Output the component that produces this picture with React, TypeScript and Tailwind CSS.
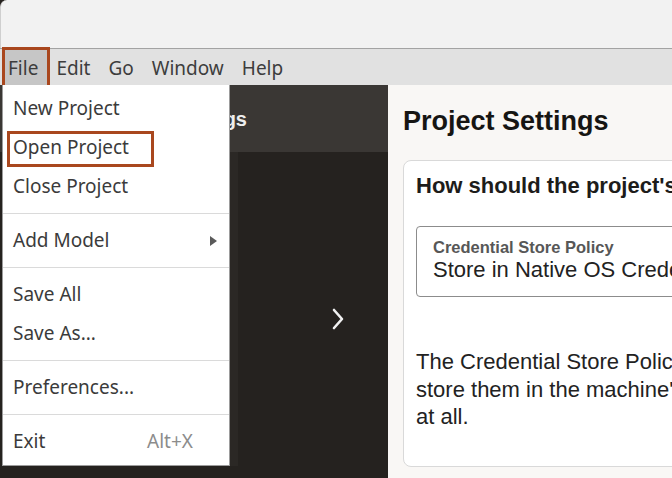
import { ReactNode } from "react";

const menuFont = { fontFamily: '"Noto Sans", "Open Sans", sans-serif' };

function MenuItem({ children, right }: { children: ReactNode; right?: ReactNode }) {
  return (
    <div className="h-[39px] flex items-center justify-between pl-[10px] pr-[12px] text-[19px] text-[#3b3b3b]">
      <span>{children}</span>
      {right}
    </div>
  );
}

function Separator() {
  return (
    <div className="h-[15px] flex items-center">
      <div className="h-px w-full bg-[#dadada]" />
    </div>
  );
}

export default function App() {
  return (
    <div className="w-[672px] h-[478px] overflow-hidden relative bg-[#25221f] flex flex-col">
      {/* Title bar */}
      <div className="h-[48px] shrink-0 bg-[#f2f2f2] rounded-tl-[7px] border-l border-[#cfcfcf]" />
      <div className="h-px shrink-0 bg-[#a3a3a3]" />

      {/* Menu bar */}
      <div
        className="h-[36px] shrink-0 bg-[#e1e1e1] flex items-center pt-[2px] pl-[8px] gap-[18px] text-[19px] text-[#3d3d3d]"
        style={menuFont}
      >
        <span className="relative">
          <span className="absolute -left-[6px] -right-[12px] -top-[7px] -bottom-[6px] bg-[#c6c6c6] border-[3px] border-[#a9471e]" />
          <span className="relative">File</span>
        </span>
        <span>Edit</span>
        <span>Go</span>
        <span>Window</span>
        <span>Help</span>
      </div>

      {/* Content */}
      <div className="flex-1 flex min-h-0">
        {/* Dark side panel */}
        <div className="w-[388px] shrink-0 flex flex-col">
          <div className="h-[67px] shrink-0 bg-[#3a3734] flex items-center">
            <div
              className="w-[247px] text-right text-[20px] font-bold text-[#eeeeee] whitespace-nowrap overflow-hidden"
              style={{ fontFamily: '"Liberation Sans", Arial, sans-serif' }}
            >
              Settings
            </div>
          </div>
          <div className="flex-1 bg-[#25221f] flex items-start justify-end pr-[43px] pt-[156px]">
            <svg width="14" height="22" viewBox="0 0 14 22" fill="none">
              <path d="M3 2 L11 11 L3 20" stroke="#f2f2f2" strokeWidth="2.6" strokeLinecap="round" strokeLinejoin="round" />
            </svg>
          </div>
        </div>

        {/* Right panel */}
        <div
          className="flex-1 bg-[#f9f7f5] pl-[15px] pt-[20px] overflow-hidden"
          style={{ fontFamily: '"Liberation Sans", Arial, sans-serif' }}
        >
          <h1 className="text-[27px] leading-[32px] font-bold text-[#161513] whitespace-nowrap">Project Settings</h1>
          <div className="mt-[23px] w-[500px] h-[307px] bg-white border border-[#d9d9d9] rounded-[8px] pl-[12px] pt-[12px]">
            <h2 className="text-[22px] leading-[26px] font-bold text-[#1d1c1a] whitespace-nowrap">
              How should the project's credentials be stored?
            </h2>
            <div className="mt-[27px] h-[71px] border border-[#8c8c8c] rounded-[4px] pl-[16px] pt-[10px]">
              <div className="text-[16.5px] leading-[20px] font-bold text-[#575757] whitespace-nowrap">Credential Store Policy</div>
              <div className="text-[22px] leading-[26px] text-[#222222] whitespace-nowrap">Store in Native OS Credential Store</div>
            </div>
            <p className="mt-[51px] text-[22px] leading-[27.5px] text-[#222222] whitespace-nowrap">
              <span className="block">The Credential Store Policy determines whether to encrypt credentials,</span>
              <span className="block">store them in the machine's native credential store, or not store them</span>
              <span className="block">at all.</span>
            </p>
          </div>
        </div>
      </div>

      {/* File dropdown menu */}
      <div className="absolute left-[2px] top-[85px] w-[236px] flex items-start" style={menuFont}>
        <div className="w-[228px] bg-white border-l border-r border-b border-[#9c9c9c] pt-[4px] pb-[4px]">
          <MenuItem>New Project</MenuItem>
          <div className="relative">
            <span className="absolute left-[4px] w-[147px] top-[3px] h-[36px] border-[3px] border-[#a9471e]" />
            <MenuItem>Open Project</MenuItem>
          </div>
          <MenuItem>Close Project</MenuItem>
          <Separator />
          <MenuItem
            right={
              <svg width="7" height="10" viewBox="0 0 7 10">
                <path d="M0 0 L7 5 L0 10 Z" fill="#5a5a5a" />
              </svg>
            }
          >
            Add Model
          </MenuItem>
          <Separator />
          <MenuItem>Save All</MenuItem>
          <MenuItem>Save As...</MenuItem>
          <Separator />
          <MenuItem>Preferences...</MenuItem>
          <Separator />
          <div className="h-[39px] flex items-center pl-[10px] text-[19px] text-[#3b3b3b]">
            <span className="w-[134px]">Exit</span>
            <span className="text-[#8c8c8c]">Alt+X</span>
          </div>
        </div>
        <div className="w-[8px] mt-[67px] h-[314px] bg-[#2b2825]" />
      </div>
    </div>
  );
}
